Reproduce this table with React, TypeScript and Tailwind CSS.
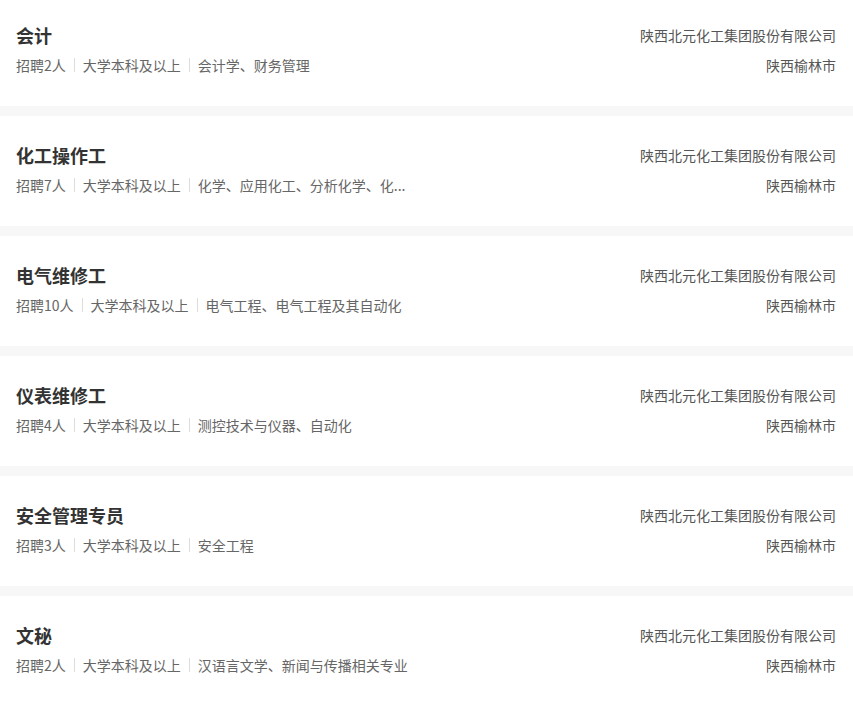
import React from "react";

type Job = {
  title: string;
  count: number;
  degree: string;
  major: string;
  company: string;
  city: string;
};

const jobs: Job[] = [
  { title: "会计", count: 2, degree: "大学本科及以上", major: "会计学、财务管理", company: "陕西北元化工集团股份有限公司", city: "陕西榆林市" },
  { title: "化工操作工", count: 7, degree: "大学本科及以上", major: "化学、应用化工、分析化学、化...", company: "陕西北元化工集团股份有限公司", city: "陕西榆林市" },
  { title: "电气维修工", count: 10, degree: "大学本科及以上", major: "电气工程、电气工程及其自动化", company: "陕西北元化工集团股份有限公司", city: "陕西榆林市" },
  { title: "仪表维修工", count: 4, degree: "大学本科及以上", major: "测控技术与仪器、自动化", company: "陕西北元化工集团股份有限公司", city: "陕西榆林市" },
  { title: "安全管理专员", count: 3, degree: "大学本科及以上", major: "安全工程", company: "陕西北元化工集团股份有限公司", city: "陕西榆林市" },
  { title: "文秘", count: 2, degree: "大学本科及以上", major: "汉语言文学、新闻与传播相关专业", company: "陕西北元化工集团股份有限公司", city: "陕西榆林市" },
];

function Divider() {
  return <span className="mx-2 h-[14px] w-px bg-[#dddddd]" />;
}

function JobRow({ job, first }: { job: Job; first: boolean }) {
  return (
    <div className={`flex justify-between bg-white pl-4 pr-[17px] pb-[31px] ${first ? "pt-[23px]" : "pt-[27px]"}`}>
      <div className="min-w-0">
        <div className="flex h-6 items-center text-[18px] font-bold text-[#333333]">{job.title}</div>
        <div className="mt-2 flex h-5 items-center text-[14px] text-[#666666]">
          <span>招聘{job.count}人</span>
          <Divider />
          <span>{job.degree}</span>
          <Divider />
          <span className="whitespace-nowrap">{job.major}</span>
        </div>
      </div>
      <div className="flex flex-col items-end text-[14px] text-[#555555]">
        <div className="flex h-6 items-center">{job.company}</div>
        <div className="mt-2 flex h-5 items-center">{job.city}</div>
      </div>
    </div>
  );
}

export default function App() {
  return (
    <div
      className="min-h-screen bg-white"
      style={{ fontFamily: '"Noto Sans CJK SC", "Noto Sans", sans-serif' }}
    >
      {jobs.map((job, i) => (
        <div key={job.title}>
          {i > 0 && <div className="h-[10px] bg-[#f7f7f7]" />}
          <JobRow job={job} first={i === 0} />
        </div>
      ))}
    </div>
  );
}
